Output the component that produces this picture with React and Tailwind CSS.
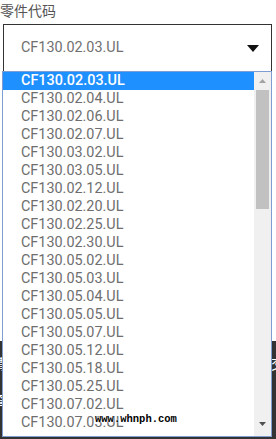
import React from "react";

const codes = [
  "CF130.02.03.UL",
  "CF130.02.04.UL",
  "CF130.02.06.UL",
  "CF130.02.07.UL",
  "CF130.03.02.UL",
  "CF130.03.05.UL",
  "CF130.02.12.UL",
  "CF130.02.20.UL",
  "CF130.02.25.UL",
  "CF130.02.30.UL",
  "CF130.05.02.UL",
  "CF130.05.03.UL",
  "CF130.05.04.UL",
  "CF130.05.05.UL",
  "CF130.05.07.UL",
  "CF130.05.12.UL",
  "CF130.05.18.UL",
  "CF130.05.25.UL",
  "CF130.07.02.UL",
  "CF130.07.03.UL",
];

const App = () => {
  return (
    <div className="relative w-[276px] h-[439px] overflow-hidden bg-white font-['Roboto',sans-serif]">
      {/* page behind the dropdown */}
      <div className="flex flex-col h-full">
        <div className="h-[22px] pt-[1px] text-[14px] leading-[18px] text-[#555] font-['Noto_Sans_CJK_SC',sans-serif]">
          零件代码
        </div>
        <div className="ml-[3px] mt-[2px] w-[269px] h-[48px] border border-[#333] flex items-center justify-between pl-[17px] pr-[12px]">
          <span className="text-[14.4px] text-[#707070]">CF130.02.03.UL</span>
          <svg width="12" height="7" viewBox="0 0 12 7">
            <path d="M0 0H12L6 7Z" fill="#111" />
          </svg>
        </div>
        <div className="flex-1 bg-white" />
        <div className="h-[98px] bg-[#333] flex flex-col gap-[20px] pt-[14px] text-white text-[14px] leading-[16px] font-['Noto_Sans_CJK_SC',sans-serif]">
          <div className="flex justify-between">
            <span className="-ml-[8px]">请输入</span>
            <span className="-mr-[9px]">提交</span>
          </div>
          <div className="-ml-[8px]">查询</div>
        </div>
      </div>

      {/* open dropdown list */}
      <div className="absolute left-[2px] top-[71px] w-[270px] h-[366px] border border-[#7f9dd1] bg-white flex">
        <ul className="flex-1 flex flex-col">
          {codes.map((c, i) => (
            <li
              key={c}
              className={
                i === 0
                  ? "h-[18px] pl-[18px] text-[14.4px] leading-[18px] font-medium bg-[#1e90ff] text-white"
                  : "h-[18px] pl-[18px] text-[14.4px] leading-[18px] text-[#6e6e6e]"
              }
            >
              {c}
            </li>
          ))}
        </ul>
        <div className="w-[17px] bg-[#f0f0f0] flex flex-col items-center">
          <div className="h-[18px] flex items-center justify-center">
            <svg width="7" height="4" viewBox="0 0 7 4">
              <path d="M0 4H7L3.5 0Z" fill="#a3a3a3" />
            </svg>
          </div>
          <div className="w-[13px] h-[119px] bg-[#c1c1c1]" />
          <div className="flex-1" />
          <div className="h-[18px] flex items-center justify-center mb-[3px]">
            <svg width="7" height="4" viewBox="0 0 7 4">
              <path d="M0 0H7L3.5 4Z" fill="#505050" />
            </svg>
          </div>
        </div>
      </div>

      {/* watermark */}
      <div className="absolute left-[95px] top-[413px] text-[10.5px] leading-[12px] font-bold text-black font-['Liberation_Mono',monospace] [text-shadow:0_0_2px_#fff,0_0_2px_#fff]">
        www.whnph.com
      </div>
    </div>
  );
};

export default App;
